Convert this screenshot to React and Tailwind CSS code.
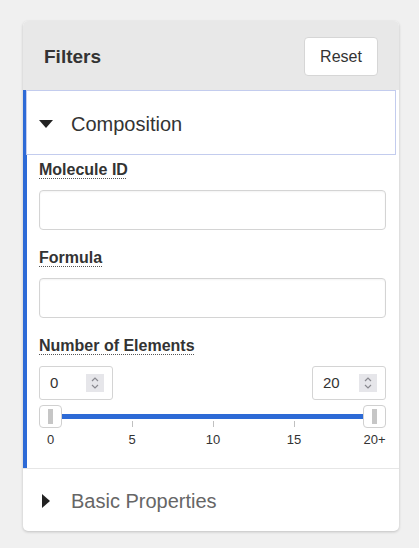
import React from 'react';

const ticks = [
  { label: '0', left: 11.5 },
  { label: '5', left: 93 },
  { label: '10', left: 174 },
  { label: '15', left: 255 },
  { label: '20+', left: 335.5 },
];

const FieldLabel = ({ children }) => (
  <div className="h-[20px] leading-[20px] text-[16px] font-bold text-[#333]">
    <span className="underline decoration-dotted decoration-[#555] decoration-1 underline-offset-[3px]">{children}</span>
  </div>
);

const Spinner = () => (
  <div className="w-[18px] h-[18px] bg-[#e6e6ea] flex items-center justify-center">
    <svg width="10" height="14" viewBox="0 0 10 14" fill="none" stroke="#8a8a90" strokeWidth="1.2">
      <path d="M2 5 L5 2 L8 5" />
      <path d="M2 9 L5 12 L8 9" />
    </svg>
  </div>
);

const NumberBox = ({ value }) => (
  <div className="w-[74px] h-[34px] border border-[#d4d4d4] rounded-[3px] bg-white flex items-center justify-between pl-[10px] pr-[8px]">
    <span className="text-[15px] text-[#333]">{value}</span>
    <Spinner />
  </div>
);

const Thumb = ({ className }) => (
  <div className={`absolute top-0 w-[23px] h-[23px] bg-white border border-[#d0d0d0] rounded-[4px] flex items-center justify-center ${className}`}>
    <div className="w-[5px] h-[15px] bg-[#c6c6c6]" />
  </div>
);

const App = () => {
  return (
    <div className="min-h-screen bg-[#f0f0f0] pt-[21px] pl-[23px]" style={{ fontFamily: '"Liberation Sans", Arial, sans-serif' }}>
      <div className="w-[376px] bg-white rounded-[5px] shadow-[0_1px_3px_rgba(0,0,0,0.2)] overflow-hidden">
        <div className="h-[69px] bg-[#e8e8e8] flex items-center justify-between pl-[21px] pr-[21px]">
          <span className="pt-[4px] text-[19px] font-bold text-[#333]">Filters</span>
          <button className="w-[74px] h-[39px] mt-[2px] bg-white border border-[#d6d6d6] rounded-[4px] text-[16px] text-[#333]">Reset</button>
        </div>

        <div className="border-l-4 border-[#2d6ad6]">
          <div className="h-[65px] mr-[3px] -ml-px border border-[#c3ccee] flex items-center pl-[12px] pt-[2px]">
            <svg width="14" height="8" viewBox="0 0 14 8" className="mr-[18px]">
              <path d="M0 0 L14 0 L7 8 Z" fill="#222" />
            </svg>
            <span className="text-[20px] text-[#333]">Composition</span>
          </div>

          <div className="pl-[12px] pr-[13px] pt-[5px] pb-[23px]">
            <FieldLabel>Molecule ID</FieldLabel>
            <input className="mt-[10px] w-full h-[40px] border border-[#d4d4d4] rounded-[4px] shadow-[inset_0_1px_2px_rgba(0,0,0,0.05)] outline-none px-2" />

            <div className="mt-[18px]">
              <FieldLabel>Formula</FieldLabel>
            </div>
            <input className="mt-[10px] w-full h-[40px] border border-[#d4d4d4] rounded-[4px] shadow-[inset_0_1px_2px_rgba(0,0,0,0.05)] outline-none px-2" />

            <div className="mt-[18px]">
              <FieldLabel>Number of Elements</FieldLabel>
            </div>
            <div className="mt-[10px] flex justify-between">
              <NumberBox value="0" />
              <NumberBox value="20" />
            </div>

            <div className="relative mt-[5px] h-[40px]">
              <div className="absolute top-[9px] left-[22px] right-[22px] h-[5px] bg-[#2d6ad6]" />
              {ticks.slice(1, 4).map((t) => (
                <div key={t.label} className="absolute top-[16px] w-px h-[6px] bg-[#c0c0c0]" style={{ left: t.left }} />
              ))}
              <Thumb className="left-0" />
              <Thumb className="right-0" />
              {ticks.map((t) => (
                <span key={t.label} className="absolute top-[27px] -translate-x-1/2 text-[13px] leading-[16px] text-[#333]" style={{ left: t.left }}>
                  {t.label}
                </span>
              ))}
            </div>
          </div>
        </div>

        <div className="h-[63px] border-t border-[#e6e6e6] flex items-center pl-[19px] pt-[2px]">
          <svg width="8" height="14" viewBox="0 0 8 14" className="mr-[21px]">
            <path d="M0 0 L8 7 L0 14 Z" fill="#222" />
          </svg>
          <span className="text-[20px] text-[#666]">Basic Properties</span>
        </div>
      </div>
    </div>
  );
};

export default App;
